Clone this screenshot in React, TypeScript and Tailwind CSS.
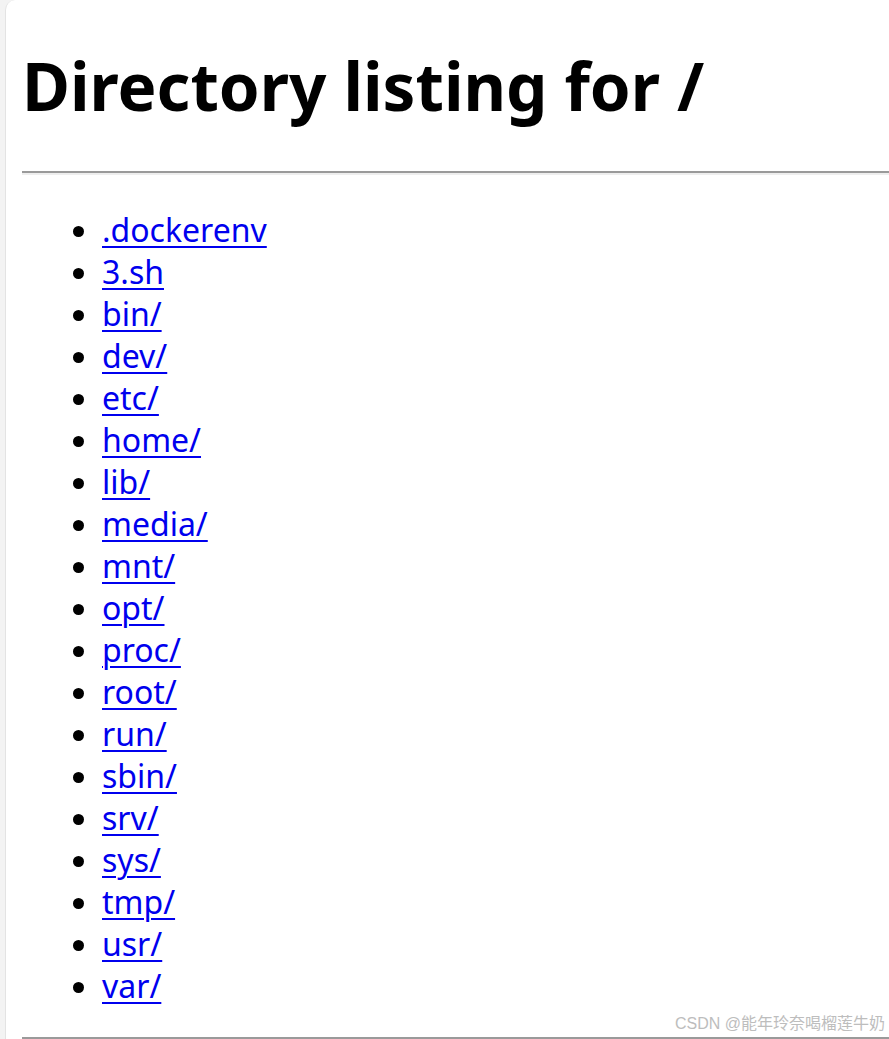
export default function App() {
  const entries = [
    ".dockerenv",
    "3.sh",
    "bin/",
    "dev/",
    "etc/",
    "home/",
    "lib/",
    "media/",
    "mnt/",
    "opt/",
    "proc/",
    "root/",
    "run/",
    "sbin/",
    "srv/",
    "sys/",
    "tmp/",
    "usr/",
    "var/",
  ]

  return (
    <div className="relative h-[1039px] overflow-hidden bg-[#f3f3f3] pl-[5px] font-['Noto_Sans',sans-serif] text-black">
      <div className="h-full rounded-tl-[10px] border-l border-[#e3e3e3] bg-white pl-[16px] pt-[43px]">
        <h1 className="m-0 text-[65.5px] font-bold leading-[85px]">Directory listing for /</h1>
        <hr className="mt-[43px] mb-[34px] border-t-2 border-b-2 border-t-[#9a9a9a] border-b-[#eeeeee]" />
        <ul className="list-disc pl-[80px]">
          {entries.map((name) => (
            <li key={name} className="text-[32px] leading-[42px] marker:text-black">
              <a href={name} className="text-[#0000ee] underline decoration-2 underline-offset-4">
                {name}
              </a>
            </li>
          ))}
        </ul>
        <hr className="mt-[30px] border-t-2 border-b-2 border-t-[#9a9a9a] border-b-[#eeeeee]" />
      </div>
      <div className="absolute right-[4px] bottom-[5px] font-['Liberation_Sans','Noto_Sans_CJK_SC',sans-serif] text-[16px] leading-[20px] text-[#bdbdbd]">
        CSDN @能年玲奈喝榴莲牛奶
      </div>
    </div>
  )
}
